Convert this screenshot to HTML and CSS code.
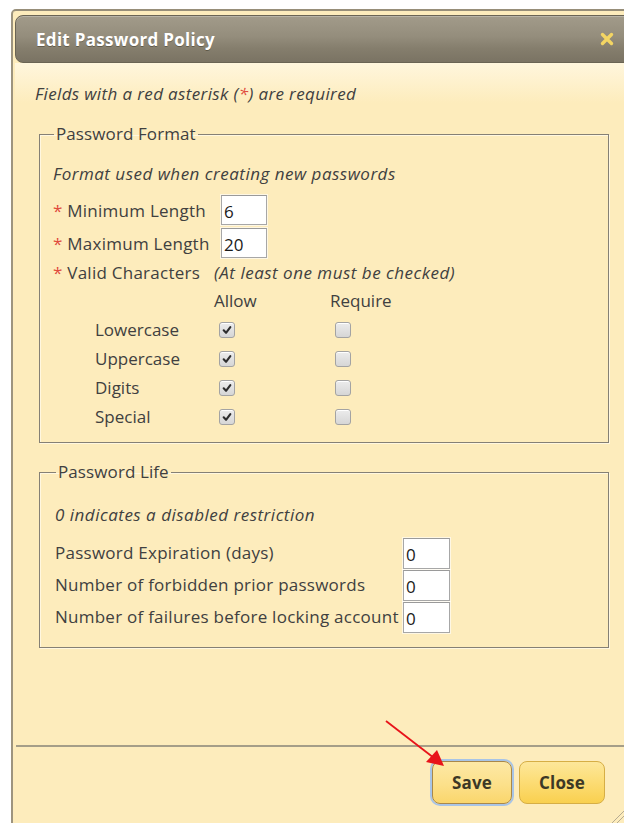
FILE: index.html
```html
<!DOCTYPE html>
<html lang="en">
<head>
<meta charset="utf-8">
<title>Edit Password Policy</title>
<link rel="stylesheet" href="styles.css">
</head>
<body>
<div class="dialog">
  <div class="titlebar">
    <span class="title">Edit Password Policy</span>
    <span class="close-btn" aria-label="close">
      <svg width="14" height="14" viewBox="0 0 14 14"><path d="M2.5 2.5 L11.5 11.5 M11.5 2.5 L2.5 11.5" stroke="#f3d563" stroke-width="3.4" stroke-linecap="round"/></svg>
    </span>
  </div>

  <div class="content">
    <p class="note">Fields with a red asterisk (<span class="req">*</span>) are required</p>

    <fieldset class="group format">
      <legend>Password Format</legend>
      <p class="hint">Format used when creating new passwords</p>
      <div class="length-grid">
        <label class="lbl"><span class="req">*</span> Minimum Length</label>
        <input class="num" type="text" value="6">
        <label class="lbl"><span class="req">*</span> Maximum Length</label>
        <input class="num" type="text" value="20">
      </div>
      <div class="valid-row">
        <span class="lbl"><span class="req">*</span> Valid Characters</span>
        <span class="hint">(At least one must be checked)</span>
      </div>
      <div class="chars">
        <span></span><span></span><span>Allow</span><span>Require</span>

        <span></span><span>Lowercase</span>
        <span class="cb checked"><svg viewBox="0 0 16 16"><path d="M4.2 8.4 L6.9 11.2 L11.8 4.6" /></svg></span>
        <span class="cb"></span>

        <span></span><span>Uppercase</span>
        <span class="cb checked"><svg viewBox="0 0 16 16"><path d="M4.2 8.4 L6.9 11.2 L11.8 4.6" /></svg></span>
        <span class="cb"></span>

        <span></span><span>Digits</span>
        <span class="cb checked"><svg viewBox="0 0 16 16"><path d="M4.2 8.4 L6.9 11.2 L11.8 4.6" /></svg></span>
        <span class="cb"></span>

        <span></span><span>Special</span>
        <span class="cb checked"><svg viewBox="0 0 16 16"><path d="M4.2 8.4 L6.9 11.2 L11.8 4.6" /></svg></span>
        <span class="cb"></span>
      </div>
    </fieldset>

    <fieldset class="group life">
      <legend>Password Life</legend>
      <p class="hint">0 indicates a disabled restriction</p>
      <div class="life-grid">
        <label class="lbl">Password Expiration (days)</label>
        <input class="num wide" type="text" value="0">
        <label class="lbl">Number of forbidden prior passwords</label>
        <input class="num wide" type="text" value="0">
        <label class="lbl">Number of failures before locking account</label>
        <input class="num wide" type="text" value="0">
      </div>
    </fieldset>
  </div>

  <div class="buttonpane">
    <button class="btn focused" type="button">Save</button>
    <button class="btn" type="button">Close</button>
  </div>
</div>

<svg class="pointer" width="80" height="70" viewBox="0 0 80 70">
  <line x1="4" y1="3" x2="52" y2="40" stroke="#e8131a" stroke-width="1.8"/>
  <polygon points="62,48 44,44 55,32" fill="#e8131a"/>
</svg>

<svg class="grip" width="14" height="14" viewBox="0 0 14 14">
  <path d="M14 2 L2 14 M14 7 L7 14" stroke="#b5ab92" stroke-width="1"/>
</svg>
</body>
</html>
```

FILE: styles.css
```css
html, body {
  margin: 0;
  padding: 0;
}

body {
  background: #ffffff;
  overflow: hidden;
  font-family: "Open Sans", "Liberation Sans", sans-serif;
  font-size: 17px;
  color: #404040;
  width: 624px;
  height: 823px;
  position: relative;
}

.dialog {
  margin: 9px 0 0 11px;
  width: 630px;
  height: 830px;
  box-sizing: border-box;
  border-top: 2px solid #978e79;
  border-left: 2px solid #9d947f;
  border-radius: 5px 0 0 0;
  background: #fdecbc;
  padding: 4px 0 0 2px;
  display: flex;
  flex-direction: column;
}

/* title bar */
.titlebar {
  height: 48px;
  box-sizing: border-box;
  border: 1px solid #6a6454;
  border-radius: 8px;
  background: linear-gradient(#a29b8a 0%, #948d7c 45%, #857e6d 70%, #7a7363 100%);
  box-shadow: inset 0 1px 0 rgba(255, 255, 255, 0.25);
  display: flex;
  align-items: center;
  padding-left: 20px;
  position: relative;
  flex: none;
}

.title {
  color: #ffffff;
  font-weight: 700;
  font-size: 17px;
  letter-spacing: 0.3px;
  text-shadow: 0 1px 0 rgba(60, 55, 40, 0.5);
}

.close-btn {
  position: absolute;
  left: 584px;
  top: 16px;
  width: 14px;
  height: 14px;
}

.close-btn svg {
  display: block;
}

/* body */
.content {
  height: 682px;
  flex: none;
  box-sizing: border-box;
  padding: 21px 0 0 20px;
  background: linear-gradient(#fff6dd 0px, #fdecbc 40px);
}

.note {
  margin: 0;
  font-style: italic;
  line-height: 20px;
  letter-spacing: 0.37px;
}

.req {
  color: #e04a3c;
  font-style: normal;
}

.note .req {
  font-style: italic;
}

.group {
  margin: 20px 0 0 4px;
  width: 570px;
  box-sizing: border-box;
  border: 1px solid #858075;
  box-shadow: 1px 1px 0 #fff7e0, inset 1px 1px 0 #fff7e0;
  padding: 0 0 0 13px;
}

.group legend {
  padding: 0 2px;
  margin-left: 1px;
  line-height: 20px;
  letter-spacing: 0.1px;
}

.hint {
  margin: 0;
  font-style: italic;
  line-height: 20px;
  letter-spacing: 0.5px;
}

.lbl {
  letter-spacing: 0.25px;
  white-space: nowrap;
}

.format {
  padding-bottom: 11px;
}

.format > .hint {
  margin-top: 20px;
}

.length-grid {
  display: grid;
  grid-template-columns: 161px 47px;
  row-gap: 3px;
  align-items: center;
  margin-top: 11px;
}

.num {
  width: 46px;
  height: 30px;
  box-sizing: border-box;
  margin: 0 0 0 7px;
  padding: 2px 0 0 2px;
  border: 1px solid #a7a7a7;
  border-top-color: #9a9a9a;
  background: #ffffff;
  font-family: "Open Sans", "Liberation Sans", sans-serif;
  font-size: 17px;
  color: #1a1a1a;
  outline: none;
  box-shadow: 0 0 0 1px rgba(255, 255, 255, 0.6);
}

.valid-row {
  display: grid;
  grid-template-columns: 161px auto;
  margin-top: 5px;
  line-height: 20px;
}

.chars {
  display: grid;
  grid-template-columns: 42px 119px 116px 80px;
  grid-auto-rows: 29px;
  grid-template-rows: 24px;
  align-items: center;
  margin-top: 8px;
}

.chars > span:nth-child(-n+4) {
  align-self: start;
  line-height: 20px;
}

.cb {
  width: 16px;
  height: 16px;
  box-sizing: border-box;
  margin-left: 5px;
  border: 1px solid #a3a3a3;
  border-radius: 3px;
  background: linear-gradient(#ececec, #d6d6d6);
  box-shadow: inset 0 1px 0 #ffffff;
}

.cb svg {
  display: block;
  width: 14px;
  height: 14px;
}

.cb svg path {
  fill: none;
  stroke: #2e2e2e;
  stroke-width: 2.4;
  stroke-linecap: round;
  stroke-linejoin: round;
}

.life {
  margin-top: 19px;
  padding-left: 15px;
  padding-bottom: 14px;
}

.life > .hint {
  margin-top: 23px;
}

.life-grid {
  display: grid;
  grid-template-columns: 348px 47px;
  grid-auto-rows: 32px;
  align-items: center;
  margin-top: 12px;
}

.life-grid .lbl {
  padding-bottom: 2px;
}

.num.wide {
  width: 47px;
  height: 31px;
  margin: 0;
}

/* bottom button pane */
.buttonpane {
  flex: none;
  margin-left: 1px;
  border-top: 2px solid #a59e88;
  display: flex;
  gap: 7px;
  padding: 14px 0 0 416px;
}

.btn {
  height: 43px;
  box-sizing: border-box;
  border: 1px solid #d6ae45;
  border-radius: 8px;
  background: linear-gradient(#fde79a 0%, #fcdc74 50%, #f9d04f 100%);
  font-family: "Open Sans", "Liberation Sans", sans-serif;
  font-weight: 700;
  font-size: 17px;
  letter-spacing: 0.2px;
  color: #3c3826;
  padding: 0;
  width: 86px;
}

.btn.focused {
  width: 80px;
  border: 1px solid #a9884a;
  background: linear-gradient(#fde9a6 0%, #fce08a 55%, #fad66c 100%);
  box-shadow: 0 0 0 2px #a8c4e6;
}

/* annotation arrow over the buttons */
.pointer {
  position: absolute;
  left: 382px;
  top: 718px;
}

.grip {
  position: absolute;
  right: 0;
  bottom: 0;
}
```
